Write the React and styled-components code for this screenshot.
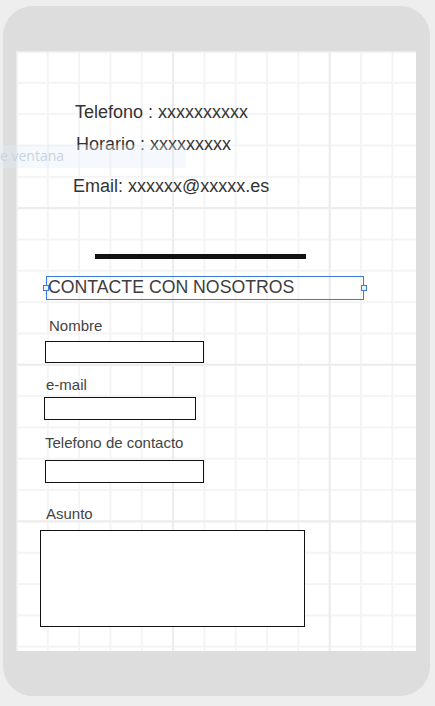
import React from "react";
import styled, { createGlobalStyle } from "styled-components";

const Global = createGlobalStyle`
  html, body { margin: 0; padding: 0; background: #eeeeee; }
  body { font-family: "Liberation Sans", Arial, sans-serif; }
  * { box-sizing: border-box; }
`;

const Stage = styled.div`
  position: relative;
  width: 435px;
  height: 706px;
  padding: 6px 5px 10px 3px;
  overflow: hidden;
`;

const Phone = styled.div`
  width: 427px;
  height: 690px;
  background: #dddddd;
  border-radius: 30px;
  padding: 45px 14px 45px 13px;
`;

const CELL = 31.33;

const Screen = styled.div`
  width: 400px;
  height: 600px;
  background-color: #ffffff;
  background-image:
    linear-gradient(to right, #ececec 0, #ececec 1.5px, transparent 1.5px),
    linear-gradient(to bottom, #ececec 0, #ececec 1.5px, transparent 1.5px),
    linear-gradient(to right, #f4f4f4 0, #f4f4f4 1.5px, transparent 1.5px),
    linear-gradient(to bottom, #f4f4f4 0, #f4f4f4 1.5px, transparent 1.5px);
  background-size:
    ${CELL * 5}px 100%,
    100% ${CELL * 5}px,
    ${CELL}px 100%,
    100% ${CELL}px;
  background-position:
    ${CELL * 5 - 0.5}px 0,
    0 ${CELL * 5 - 0.5}px,
    ${CELL - 0.5}px 0,
    0 ${CELL - 0.5}px;
  display: flex;
  flex-direction: column;
  align-items: flex-start;
  padding-top: 51px;
`;

const InfoLine = styled.div`
  font-size: 18px;
  line-height: 20px;
  color: #333333;
  white-space: nowrap;
  margin-left: ${(p) => p.$left}px;
  margin-top: ${(p) => p.$top || 0}px;
`;

const Bar = styled.div`
  width: 211px;
  height: 5px;
  background: #111111;
  margin-left: 79px;
  margin-top: 58px;
`;

const TitleBox = styled.div`
  position: relative;
  width: 318px;
  height: 24px;
  margin-left: 30px;
  margin-top: 17px;
  border: 1px solid #3c78e0;
  padding-left: 1px;
  font-size: 17.7px;
  line-height: 21px;
  color: #3d3d3d;
  white-space: nowrap;
`;

const Handle = styled.span`
  position: absolute;
  top: 50%;
  width: 6px;
  height: 6px;
  margin-top: -3px;
  background: #eef3fd;
  border: 1px solid #3c78e0;
  ${(p) => (p.$side === "left" ? "left: -4px;" : "right: -4px;")}
`;

const Label = styled.div`
  font-size: 15px;
  line-height: 18px;
  color: #444444;
  white-space: nowrap;
  margin-left: ${(p) => p.$left}px;
  margin-top: ${(p) => p.$top}px;
`;

const Field = styled.div`
  width: ${(p) => p.$w}px;
  height: ${(p) => p.$h}px;
  margin-left: ${(p) => p.$left}px;
  margin-top: ${(p) => p.$top}px;
  border: 1px solid #111111;
  background: #ffffff;
`;

const Ghost = styled.div`
  position: absolute;
  left: 0;
  top: 145px;
  width: 186px;
  height: 23px;
  background: rgba(225, 238, 250, 0.35);
  overflow: hidden;
`;

const GhostText = styled.span`
  display: block;
  font-family: "Open Sans", "DejaVu Sans", sans-serif;
  font-size: 14px;
  line-height: 22px;
  color: #c9d4dd;
  white-space: nowrap;
`;

export default function App() {
  return (
    <>
      <Global />
      <Stage>
        <Phone>
          <Screen>
            <InfoLine $left={59}>Telefono : xxxxxxxxxx</InfoLine>
            <InfoLine $left={60} $top={12}>Horario : xxxxxxxxx</InfoLine>
            <InfoLine $left={57} $top={22}>Email: xxxxxx@xxxxx.es</InfoLine>
            <Bar />
            <TitleBox>
              CONTACTE CON NOSOTROS
              <Handle $side="left" />
              <Handle $side="right" />
            </TitleBox>
            <Label $left={33} $top={16.5}>Nombre</Label>
            <Field $left={29} $top={6.5} $w={159} $h={22} />
            <Label $left={30} $top={12.8}>e-mail</Label>
            <Field $left={28} $top={3.2} $w={152} $h={23} />
            <Label $left={29} $top={13.8}>Telefono de contacto</Label>
            <Field $left={29} $top={8.2} $w={159} $h={23} />
            <Label $left={30} $top={22}>Asunto</Label>
            <Field $left={24} $top={7} $w={265} $h={97} />
          </Screen>
        </Phone>
        <Ghost>
          <GhostText>e ventana</GhostText>
        </Ghost>
      </Stage>
    </>
  );
}
